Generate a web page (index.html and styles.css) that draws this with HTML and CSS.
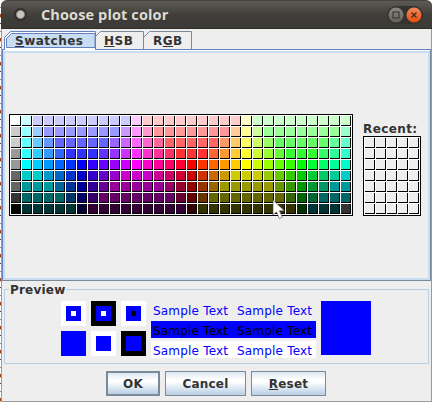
FILE: index.html
```html
<!DOCTYPE html>
<html lang="en">
<head>
<meta charset="utf-8">
<title>Choose plot color</title>
<link rel="stylesheet" href="styles.css">
</head>
<body>
<div class="backdrop"></div>
<div class="window">
  <header class="titlebar">
    <span class="app-dot"></span>
    <h1 class="title">Choose plot color</h1>
    <svg class="controls" width="36" height="18" viewBox="0 0 36 18">
      <defs>
        <linearGradient id="gray" x1="0" y1="0" x2="0" y2="1"><stop offset="0" stop-color="#8b8a81"/><stop offset="1" stop-color="#625f58"/></linearGradient>
        <linearGradient id="orange" x1="0" y1="0" x2="0" y2="1"><stop offset="0" stop-color="#f58a5e"/><stop offset="1" stop-color="#e44d09"/></linearGradient>
      </defs>
      <rect width="36" height="18" rx="9" fill="#33322e"/>
      <circle cx="9" cy="9" r="7.5" fill="url(#gray)"/>
      <rect x="6" y="6" width="6" height="6" fill="none" stroke="#3c3b37" stroke-width="1.2"/>
      <circle cx="27" cy="9" r="7.5" fill="url(#orange)"/>
      <path d="M24.5 6.5l5 5m0-5l-5 5" stroke="#4a2a1b" stroke-width="1.4"/>
    </svg>
  </header>
  <nav class="tabs">
    <div class="tab tab-swatches">
      <svg class="shape" width="92" height="19"><path d="M.5 19V6.5L6.5.5h85V19" fill="#fff" stroke="#6382bf"/><path d="M2.5 16.5V7.5l5-5H91v14z" fill="#c8ddf2" stroke="#6382bf"/></svg>
      <span class="label"><u>S</u>watches</span>
    </div>
    <div class="tab tab-hsb">
      <svg class="shape" width="49" height="19"><path d="M0 6L5.5.5h43V18" fill="none" stroke="#7a8a99"/></svg>
      <span class="label"><u>H</u>SB</span>
    </div>
    <div class="tab tab-rgb">
      <svg class="shape" width="49" height="19"><path d="M0 6L5.5.5h42V18" fill="none" stroke="#7a8a99"/></svg>
      <span class="label">R<u>G</u>B</span>
    </div>
  </nav>
  <main class="pane">
    <div class="grid swatches" id="swatches"></div>
    <section class="recent">
      <h2 class="recent-title">Recent:</h2>
      <div class="grid recent-grid" id="recent"></div>
    </section>
    <svg class="cursor" width="14" height="21" viewBox="0 0 14 21"><path d="M1 1v15l3.4-3.1 3 6.6 3-1.4-3-6.3h5z" fill="#fff" stroke="#444" stroke-width=".6"/></svg>
  </main>
  <section class="preview">
    <h2 class="preview-title">Preview</h2>
    <div class="squares">
      <i class="sq on-white"><b class="white"></b></i><i class="sq on-black"><b class="white"></b></i><i class="sq on-white"><b class="black"></b></i>
      <i class="sq solid"></i><i class="sq on-white"></i><i class="sq on-black"></i>
    </div>
    <div class="samples">
      <p class="sample"><span>Sample Text</span><span>Sample Text</span></p>
      <p class="sample filled"><span>Sample Text</span><span>Sample Text</span></p>
      <p class="sample light"><span>Sample Text</span><span>Sample Text</span></p>
    </div>
    <div class="current"></div>
  </section>
  <footer class="buttons">
    <button class="btn ok">OK</button>
    <button class="btn cancel">Cancel</button>
    <button class="btn reset"><u>R</u>eset</button>
  </footer>
</div>
<script src="script.js"></script>
</body>
</html>
```
FILE: styles.css
```css
* { box-sizing: border-box; }
body {
  margin: 0;
  width: 432px;
  height: 402px;
  display: flex;
  overflow: hidden;
  background: #fff;
  font: bold 12px/14px "DejaVu Sans", sans-serif;
  color: #333;
}
h1, h2, p { margin: 0; font: inherit; }
u { text-decoration: underline 1px; text-underline-offset: 1px; text-decoration-skip-ink: none; }

.backdrop {
  width: 1px;
  background: repeating-linear-gradient(#fff 0 7px, #888 7px 8px, #fff 8px 14px, #a43a1c 14px 17px, #e8c49a 17px 18px, #fff 18px 23px, #444 23px 24px);
}
.window {
  width: 431px;
  height: 402px;
  display: flex;
  flex-direction: column;
  border: solid #9b9b9b;
  border-width: 0 1px 1px;
  border-radius: 6px 6px 0 0;
  background: #eee;
}

.titlebar {
  flex: none;
  height: 29px;
  margin: 0 -1px;
  display: flex;
  align-items: center;
  padding: 0 9px 0 13px;
  border-top: 1px solid #454440;
  border-bottom: 1px solid #2f2e2b;
  border-radius: 6px 6px 0 0;
  background: linear-gradient(#5b5a54, #3e3d39 55%, #3b3a36);
}
.app-dot {
  width: 13px;
  height: 13px;
  border-radius: 50%;
  background: radial-gradient(circle, #c9c6bd 0 3px, #8d8a82 4px, #302f2c 5px);
}
.title {
  margin-left: 14px;
  font: bold 14.5px/20px "Open Sans", sans-serif;
  letter-spacing: .12px;
  color: #dfdbd2;
}
.controls { margin-left: auto; }

.tabs {
  flex: none;
  height: 20px;
  padding: 2px 0 0 2px;
  display: flex;
}
.tab { position: relative; height: 19px; z-index: 1; }
.tab-swatches { width: 91px; }
.tab-hsb { width: 49px; }
.tab-rgb { width: 49px; }
.shape { position: absolute; left: 0; top: 0; }
.label { position: relative; display: block; padding: 3px 0 0 11px; white-space: nowrap; letter-spacing: .5px; }
.tab-hsb .label { padding-left: 9px; }
.tab-rgb .label { padding-left: 9px; }

.pane {
  position: relative;
  flex: none;
  height: 232px;
  display: flex;
  align-items: flex-start;
  padding: 64px 0 0 6px;
  border: 1px solid #6382bf;
  border-right-color: #7a8a99;
  border-bottom-color: #7a8a99;
  box-shadow: inset 0 1px #fff, inset 2px 0 #c8ddf2, inset -2px 0 #c8ddf2, inset 0 -2px #c8ddf2, inset 0 3px #c8ddf2;
}
.grid {
  display: grid;
  grid-auto-rows: 10px;
  gap: 1px;
  padding: 1px;
  border: 1px solid #000;
  background: #fff;
}
.swatches { grid-template-columns: repeat(31, 10px); width: 344px; height: 102px; }
.recent { margin: 8px 0 0 10px; }
.recent-title { height: 14px; letter-spacing: .4px; }
.recent-grid { grid-template-columns: repeat(5, 10px); width: 58px; height: 80px; }
.cell {
  border: solid #000;
  border-width: 0 1px 1px 0;
  background-color: #eee;
}
.cursor { position: absolute; left: 269px; top: 149px; }

.preview {
  position: relative;
  flex: none;
  height: 75px;
  margin: 8px 2px 0;
  padding: 11px 0 0 56px;
  display: flex;
  align-items: flex-start;
  border: 1px solid #b8cfe5;
}
.preview-title {
  position: absolute;
  left: 4px;
  top: -7px;
  padding: 0 1px 0 1px;
  letter-spacing: .2px;
  background: #eee;
}
.squares { display: grid; grid-template-columns: repeat(3, 25px); gap: 5px; }
.sq { width: 25px; height: 25px; background: #00f; border: 5px solid #00f; display: grid; place-items: center; }
.on-white { border-color: #fff; }
.on-black { border-color: #000; }
.sq b { width: 5px; height: 5px; }
.white { background: #fff; }
.black { background: #000; }
.samples { margin-left: 5px; display: grid; gap: 3px; }
.sample {
  width: 165px;
  height: 17px;
  padding-left: 2px;
  display: flex;
  gap: 9px;
  font-weight: normal;
  line-height: 21px;
  letter-spacing: .2px;
  color: #00f;
}
.sample span { width: 75px; white-space: nowrap; }
.filled { background: #00f; color: #000; }
.light { background: #fff; }
.current { margin-left: 5px; width: 50px; height: 54px; background: #00f; }

.buttons { display: flex; gap: 5px; padding: 7px 0 0 104px; }
.btn {
  height: 25px;
  padding: 0;
  border: 1px solid #7a8a99;
  border-radius: 0;
  background: linear-gradient(#dde8f3, #fff 35%, #fff 42%, #b8cfe5);
  font: inherit;
  color: #333;
}
.ok { width: 54px; border-width: 2px; letter-spacing: .3px; }
.cancel { width: 81px; letter-spacing: .2px; }
.reset { width: 75px; letter-spacing: .2px; }
```
FILE: script.js
```js
// Each row lists hex colours (shorthand) with an optional repeat count.
const rows = [
  "fff cff ccf*9 fcf fcc*9 ffc cfc*9",
  "ccc 9ff 9cf 99f*7 c9f f9f f9c f99*7 fc9 ff9 cf9 9f9*7 9fc",
  "ccc 6ff 6cf 69f 66f*5 96f c6f f6f f6c f69 f66*5 f96 fc6 ff6 cf6 9f6 6f6*5 6f9 6fc",
  "999 3ff 3cf 39f 36f 33f*3 63f 93f c3f f3f f3c f39 f36 f33*3 f63 f93 fc3 ff3 cf3 9f3 6f3 3f3*3 3f6 3f9 3fc",
  "999 0ff 0cf 09f 06f 03f 00f 30f 60f 90f c0f f0f f0c f09 f06 f03 f00 f30 f60 f90 fc0 ff0 cf0 9f0 6f0 3f0 0f0 0f3 0f6 0f9 0fc",
  "666 0cc*2 09c 06c 03c 00c 30c 60c 90c c0c*3 c09 c06 c03 c00 c30 c60 c90 cc0*3 9c0 6c0 3c0 0c0 0c3 0c6 0c9 0cc",
  "666 099*3 069 039 009 309 609 909*5 906 903 900 930 960 990*5 690 390 090 093 096 099*2",
  "333 066*4 036 006 306 606*7 603 600 630 660*7 360 060 063 066*3",
  "000 033*5 003 303*9 300 330*9 030 033*3 333"
];

function addCell(parent, color) {
  const cell = document.createElement("div");
  cell.className = "cell";
  if (color) cell.style.backgroundColor = "#" + color;
  parent.appendChild(cell);
}

const swatches = document.getElementById("swatches");
for (const row of rows) {
  for (const entry of row.split(" ")) {
    const [color, count = 1] = entry.split("*");
    for (let i = 0; i < count; i++) addCell(swatches, color);
  }
}

const recent = document.getElementById("recent");
for (let i = 0; i < 35; i++) addCell(recent);
```
